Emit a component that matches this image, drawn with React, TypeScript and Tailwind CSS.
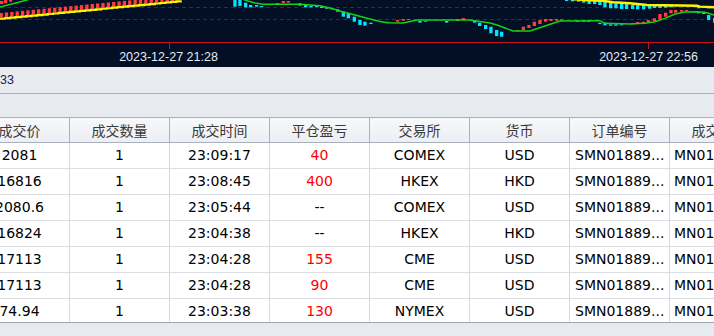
import { memo } from 'react';

type Bar = [number, number, number]; // x, top, bottom

// upper series (yellow line), left side: red bodies sitting on the line
const yellowLeft = Array.from({ length: 34 }, (_, i) => {
  const x = i * 5.36 - 0.5;
  return { x, y: 17.7 - x * 0.098 };
});

const topCyan: Bar[] = [
  [565, 0, 1], [571, 0, 1.3], [577, 0, 1.7], [582, 0, 2.7], [587.5, 0, 4], [593, 0, 4],
  [598.3, 1, 5], [603.3, 1.7, 7.3], [609, 2.7, 8.3], [614.3, 3.3, 8.3], [620, 3.3, 9],
  [625, 4, 9], [631, 4.7, 9], [636, 4.7, 9.3], [642, 4.7, 9.3], [648, 5.3, 8.7],
  [653, 5.3, 8], [658.3, 6, 8], [664, 6, 7.7], [669.3, 6, 7.3], [697, 6.7, 8.3], [707, 6.7, 8.3],
];

const redBars: Bar[] = [
  [0, 1, 4], [4, 0, 3.3], [9, 0, 1.7],
  [271, 4, 4.8], [276, 3, 3.8], [281.7, 1, 3], [286.7, 1, 2.7],
  [386, 21.7, 22.7], [396, 20, 21.7], [401.7, 19, 20.7], [407, 19, 19.8],
  [456, 19, 21], [461.7, 18, 20],
  [516, 30, 31], [521.7, 26.7, 30], [527.3, 25, 28], [532.7, 21.7, 26], [538.3, 20, 24],
  [544, 19, 21.7], [549.3, 19, 21], [555, 19, 20.7], [560, 19.3, 20.7],
  [631, 23.3, 24.3], [636, 22, 24], [641.7, 21.7, 23.3], [646.7, 20, 22.3], [652.7, 18.3, 21],
  [658.3, 14, 19], [664, 12.7, 16.7], [669.3, 10, 13.3], [674, 10, 12.7], [680, 10, 11.7], [685, 10, 11],
];

const cyanBars: Bar[] = [
  [233.3, 0, 6.7], [238.3, 0, 6], [244, 2.7, 7.3], [249, 5, 7.3], [255, 5, 6.7], [260, 6, 6.7],
  [298.3, 3.3, 5.7], [304, 4.7, 7.3], [309.3, 6, 7.3], [315, 6, 6.7], [320, 6.7, 8], [325, 7.3, 8.7],
  [330, 8.3, 9.3], [336, 9.3, 11.7], [341.7, 11.7, 16.7], [346.7, 13.3, 18.3], [352.7, 16.7, 21.7],
  [358.3, 20, 25], [363.3, 21.7, 25.7], [369.3, 22.7, 24], [418.3, 20.7, 22.7], [424, 20.7, 21.3],
  [445, 21, 22.7], [473, 20, 22.7], [478, 22.7, 26], [484, 25, 29], [489.3, 26.7, 33.3],
  [495, 30, 36], [500, 31.7, 36.7], [576, 20.7, 21.3], [582, 20.7, 21.3], [587, 20.7, 21.3],
  [598.3, 22.7, 24], [603.3, 22.7, 25.3], [609, 24.3, 25.7], [614.3, 24.3, 25.7], [620, 24.3, 25.3],
  [696.7, 11.7, 13.3], [702, 12.7, 14], [707, 15, 20], [713, 18, 22.7],
];

const greenLeft = '0,7 27,0 30,-1';
const greenRight =
  '242,-1 248,1 255,3 263,4.3 300,4.3 320,5.7 330,8 340,11 355,15 370,19 380,21.5 387,22.7 403,23 410,21.5 417,20 470,20 480,21.5 490,23 497,25 505,28 513,31 530,31 545,26 560,21 600,20.7 605,23.3 630,24 645,23.3 655,21.7 665,18.3 675,14 685,12 695,11.7 705,12.3 714,15';
const yellowRight = '560,-2 588,0.4 603,0.9 608,1.5 613,2.3 630,3.3 647,5 697,5.8 700,6.6 714,7.2';

const Chart = memo(() => (
  <div className="h-[67px] bg-[#020f25] shrink-0">
    <svg width="714" height="67" viewBox="0 0 714 67" className="block">
      <line x1="0" y1="7.5" x2="714" y2="7.5" stroke="#6a1822" strokeDasharray="4 3" />
      <line x1="0" y1="19.5" x2="714" y2="19.5" stroke="#6a1822" strokeDasharray="4 3" />
      {yellowLeft.map((p, i) => (
        <rect key={'yl' + i} x={p.x} y={p.y - 4.8} width="3.3" height="4.8" fill="#ff3d3d" />
      ))}
      {redBars.map(([x, a, b], i) => (
        <rect key={'r' + i} x={x} y={a} width="3.3" height={Math.max(b - a, 1)} fill="#ff3d3d" />
      ))}
      {cyanBars.map(([x, a, b], i) => (
        <rect key={'c' + i} x={x} y={a} width="3.3" height={Math.max(b - a, 1)} fill="#00e6ff" />
      ))}
      {topCyan.map(([x, a, b], i) => (
        <rect key={'t' + i} x={x} y={a} width="3.3" height={Math.max(b - a, 1)} fill="#00e6ff" />
      ))}
      <polyline
        points={yellowLeft.map((p) => `${p.x},${p.y + 1} ${p.x + 5.36},${p.y + 1}`).join(' ')}
        fill="none"
        stroke="#fff200"
        strokeWidth="2.2"
      />
      <polyline points={yellowRight} fill="none" stroke="#fff200" strokeWidth="2.4" />
      <polyline points={greenLeft} fill="none" stroke="#14d414" strokeWidth="1.4" />
      <polyline points={greenRight} fill="none" stroke="#14d414" strokeWidth="1.4" />
      <line x1="0" y1="42.5" x2="714" y2="42.5" stroke="#c8161a" />
      <line x1="169.5" y1="42" x2="169.5" y2="49" stroke="#c8161a" />
      <line x1="648.5" y1="42" x2="648.5" y2="49" stroke="#c8161a" />
      <text x="168.5" y="61" textAnchor="middle" fill="#e4ebf3" fontSize="12.5" fontFamily="'Liberation Sans', Arial, sans-serif">
        2023-12-27 21:28
      </text>
      <text x="648.5" y="61" textAnchor="middle" fill="#e4ebf3" fontSize="12.5" fontFamily="'Liberation Sans', Arial, sans-serif">
        2023-12-27 22:56
      </text>
    </svg>
  </div>
));

const HEADERS = ['成交价', '成交数量', '成交时间', '平仓盈亏', '交易所', '货币', '订单编号', '成交编号'];

type Row = { price: string; qty: string; time: string; pnl: string; ex: string; cur: string };

const ROWS: Row[] = [
  { price: '2081', qty: '1', time: '23:09:17', pnl: '40', ex: 'COMEX', cur: 'USD' },
  { price: '16816', qty: '1', time: '23:08:45', pnl: '400', ex: 'HKEX', cur: 'HKD' },
  { price: '2080.6', qty: '1', time: '23:05:44', pnl: '--', ex: 'COMEX', cur: 'USD' },
  { price: '16824', qty: '1', time: '23:04:38', pnl: '--', ex: 'HKEX', cur: 'HKD' },
  { price: '17113', qty: '1', time: '23:04:28', pnl: '155', ex: 'CME', cur: 'USD' },
  { price: '17113', qty: '1', time: '23:04:28', pnl: '90', ex: 'CME', cur: 'USD' },
  { price: '74.94', qty: '1', time: '23:03:38', pnl: '130', ex: 'NYMEX', cur: 'USD' },
];

const cell = 'w-[100px] shrink-0 border-r border-[#d6dadf] flex items-center overflow-hidden whitespace-nowrap';

export default function App() {
  return (
    <div className="w-[714px] h-[336px] overflow-hidden flex flex-col bg-[#e7eaef] font-['DejaVu_Sans',sans-serif]">
      <Chart />

      {/* info strip */}
      <div className="h-[27px] shrink-0 border-b border-[#a9afb9] flex items-center">
        <span className="text-[12.5px] text-[#18215c] font-['Liberation_Sans',sans-serif]">33</span>
      </div>
      <div className="h-[23px] shrink-0"></div>

      {/* deal table */}
      <div className="h-[206px] shrink-0 overflow-hidden border-b border-[#9fa6b0] bg-white">
        <div className="ml-[-30px] w-[900px]">
          <div className="h-[26px] flex border-y border-[#a9b0ba] bg-gradient-to-b from-[#f7f8fa] to-[#eceff3]">
            {HEADERS.map((h) => (
              <div
                key={h}
                className="w-[100px] shrink-0 border-r border-[#a9b0ba] flex items-center justify-center text-[14px] text-[#3a3a3a] font-['Noto_Sans_CJK_SC',sans-serif] whitespace-nowrap"
              >
                {h}
              </div>
            ))}
          </div>
          {ROWS.map((r, i) => (
            <div key={i} className="h-[26px] flex border-b border-[#dadde2] text-[14px] text-black">
              <div className={cell + ' justify-center'}>{r.price}</div>
              <div className={cell + ' justify-center'}>{r.qty}</div>
              <div className={cell + ' justify-center'}>{r.time}</div>
              <div className={cell + ' justify-center ' + (r.pnl === '--' ? 'text-black' : 'text-[#ff0000]')}>{r.pnl}</div>
              <div className={cell + ' justify-center'}>{r.ex}</div>
              <div className={cell + ' justify-center'}>{r.cur}</div>
              <div className={cell + ' pl-[5px]'}>SMN01889...</div>
              <div className={cell + ' pl-[4px]'}>MN01889...</div>
            </div>
          ))}
        </div>
      </div>
      <div className="flex-1"></div>
    </div>
  );
}
